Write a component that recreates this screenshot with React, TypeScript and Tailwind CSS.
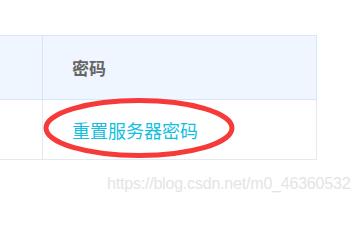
export default function App() {
  return (
    <div className="relative w-[364px] h-[202px] overflow-hidden bg-white font-['Noto_Sans_CJK_SC',sans-serif]">
      {/* cut-off line of text above the table */}
      <div className="h-[35px] overflow-hidden">
        <p className="-mt-[17px] pl-[2px] text-[15px] leading-[18px] text-[#777] whitespace-nowrap">
          在实例列表，找到对应的云服务器，点击“更多”，选择重置密码，重置后重启生效即可。
        </p>
      </div>

      <div className="relative -ml-px w-[318px]">
        <table className="w-full border-collapse">
          <thead>
            <tr className="h-[64px] bg-[#eff6ff]">
              <th className="w-[43px] border border-[#d6e6f7]"></th>
              <th className="border border-[#d6e6f7] pl-[29px] text-left text-[17px] font-bold text-[#666]">
                密码
              </th>
            </tr>
          </thead>
          <tbody>
            <tr className="h-[60px]">
              <td className="border border-[#e3e9ef]"></td>
              <td className="border border-[#e3e9ef] pl-[29px] pt-[1px] text-[18px] text-[#12bfe0]">
                重置服务器密码
              </td>
            </tr>
          </tbody>
        </table>

        {/* hand-drawn red circle annotation */}
        <svg className="absolute left-[43px] top-[62px]" width="196" height="62" viewBox="0 0 196 62">
          <ellipse cx="97" cy="31" rx="93" ry="27.5" fill="none" stroke="#f63a3a" strokeWidth="5" />
        </svg>
      </div>

      <p className="absolute left-[107px] top-[174px] font-['Liberation_Sans',Arial,sans-serif] text-[16px] leading-[20px] tracking-[-0.2px] text-[#e4e4e4] whitespace-nowrap">
        https://blog.csdn.net/m0_46360532
      </p>
    </div>
  );
}
